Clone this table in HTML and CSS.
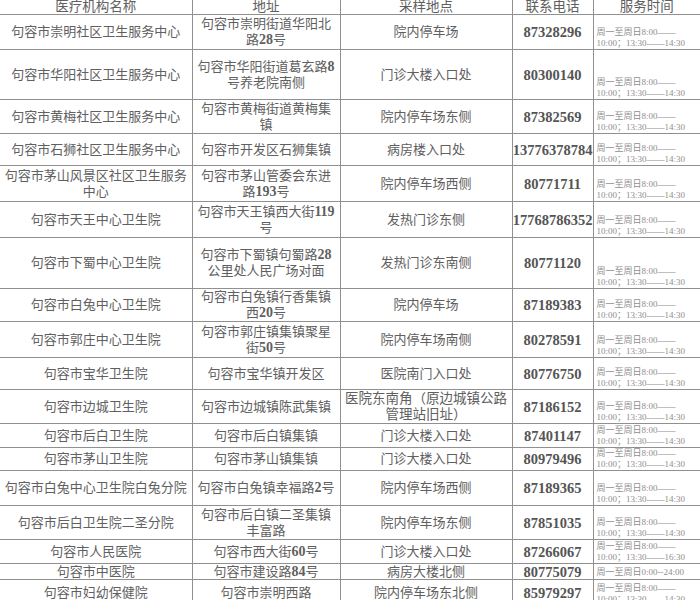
FILE: index.html
```html
<!DOCTYPE html>
<html lang="zh">
<head>
<meta charset="utf-8">
<link rel="stylesheet" href="styles.css">
</head>
<body>
<table class="sites">
<colgroup>
<col class="c-name"><col class="c-addr"><col class="c-place"><col class="c-tel"><col class="c-time">
</colgroup>
<thead>
<tr><th>医疗机构名称</th><th>地址</th><th>采样地点</th><th>联系电话</th><th>服务时间</th></tr>
</thead>
<tbody>
<tr><td>句容市崇明社区卫生服务中心</td><td>句容市崇明街道华阳北<br>路<span class="d">28</span>号</td><td>院内停车场</td><td class="tel">87328296</td><td class="time">周一至周日8:00——<br>10:00；13:30——14:30</td></tr>
<tr><td>句容市华阳社区卫生服务中心</td><td>句容市华阳街道葛玄路<span class="d">8</span><br>号养老院南侧</td><td>门诊大楼入口处</td><td class="tel">80300140</td><td class="time">周一至周日8:00——<br>10:00；13:30——14:30</td></tr>
<tr><td>句容市黄梅社区卫生服务中心</td><td>句容市黄梅街道黄梅集<br>镇</td><td>院内停车场东侧</td><td class="tel">87382569</td><td class="time">周一至周日8:00——<br>10:00；13:30——14:30</td></tr>
<tr><td>句容市石狮社区卫生服务中心</td><td>句容市开发区石狮集镇</td><td>病房楼入口处</td><td class="tel">13776378784</td><td class="time">周一至周日8:00——<br>10:00；13:30——14:30</td></tr>
<tr><td>句容市茅山风景区社区卫生服务<br>中心</td><td>句容市茅山管委会东进<br>路<span class="d">193</span>号</td><td>院内停车场西侧</td><td class="tel">80771711</td><td class="time">周一至周日8:00——<br>10:00；13:30——14:30</td></tr>
<tr><td>句容市天王中心卫生院</td><td>句容市天王镇西大街<span class="d">119</span><br>号</td><td>发热门诊东侧</td><td class="tel">17768786352</td><td class="time">周一至周日8:00——<br>10:00；13:30——14:30</td></tr>
<tr><td>句容市下蜀中心卫生院</td><td>句容市下蜀镇句蜀路<span class="d">28</span><br>公里处人民广场对面</td><td>发热门诊东南侧</td><td class="tel">80771120</td><td class="time">周一至周日8:00——<br>10:00；13:30——14:30</td></tr>
<tr><td>句容市白兔中心卫生院</td><td>句容市白兔镇行香集镇<br>西<span class="d">20</span>号</td><td>院内停车场</td><td class="tel">87189383</td><td class="time">周一至周日8:00——<br>10:00；13:30——14:30</td></tr>
<tr><td>句容市郭庄中心卫生院</td><td>句容市郭庄镇集镇聚星<br>街<span class="d">50</span>号</td><td>院内停车场南侧</td><td class="tel">80278591</td><td class="time">周一至周日8:00——<br>10:00；13:30——14:30</td></tr>
<tr><td>句容市宝华卫生院</td><td>句容市宝华镇开发区</td><td>医院南门入口处</td><td class="tel">80776750</td><td class="time">周一至周日8:00——<br>10:00；13:30——14:30</td></tr>
<tr><td>句容市边城卫生院</td><td>句容市边城镇陈武集镇</td><td class="wide">医院东南角（原边城镇公路<br>管理站旧址）</td><td class="tel">87186152</td><td class="time">周一至周日8:00——<br>10:00；13:30——14:30</td></tr>
<tr><td>句容市后白卫生院</td><td>句容市后白镇集镇</td><td>门诊大楼入口处</td><td class="tel">87401147</td><td class="time">周一至周日8:00——<br>10:00；13:30——14:30</td></tr>
<tr><td>句容市茅山卫生院</td><td>句容市茅山镇集镇</td><td>门诊大楼入口处</td><td class="tel">80979496</td><td class="time">周一至周日8:00——<br>10:00；13:30——14:30</td></tr>
<tr><td>句容市白兔中心卫生院白兔分院</td><td>句容市白兔镇幸福路<span class="d">2</span>号</td><td>院内停车场西侧</td><td class="tel">87189365</td><td class="time">周一至周日8:00——<br>10:00；13:30——14:30</td></tr>
<tr><td>句容市后白卫生院二圣分院</td><td>句容市后白镇二圣集镇<br>丰富路</td><td>院内停车场东侧</td><td class="tel">87851035</td><td class="time">周一至周日8:00——<br>10:00；13:30——14:30</td></tr>
<tr><td>句容市人民医院</td><td>句容市西大街<span class="d">60</span>号</td><td>门诊大楼入口处</td><td class="tel">87266067</td><td class="time">周一至周日8:00——<br>10:00；13:30——16:30</td></tr>
<tr><td>句容市中医院</td><td>句容市建设路<span class="d">84</span>号</td><td>病房大楼北侧</td><td class="tel">80775079</td><td class="time">周一至周日0:00--24:00</td></tr>
<tr><td>句容市妇幼保健院</td><td>句容市崇明西路</td><td>院内停车场东北侧</td><td class="tel">85979297</td><td class="time">周一至周日8:00——<br>10:00；13:30——14:30</td></tr>
</tbody>
</table>
</body>
</html>
```

FILE: styles.css
```css
html, body {
  margin: 0;
  padding: 0;
  background: #fff;
  overflow: hidden;
}

.sites {
  border-collapse: collapse;
  table-layout: fixed;
  width: 700px;
  font-family: "Liberation Serif", "Noto Sans CJK SC", serif;
  color: #606060;
}

.c-name { width: 192px; }
.c-addr { width: 148px; }
.c-place { width: 172px; }
.c-tel { width: 81px; }
.c-time { width: 107px; }

.sites th,
.sites td {
  border: 1px solid #909090;
  padding: 0;
  text-align: center;
  vertical-align: middle;
  white-space: nowrap;
  overflow: hidden;
  font-size: 13px;
  line-height: 16px;
  font-weight: 400;
}

.sites th {
  border-top: none;
  height: 14px;
  line-height: 14px;
  font-size: 13.5px;
  color: #606060;
}

.sites tr > :first-child { border-left: none; }
.sites tr > :last-child { border-right: none; }

.sites td.tel {
  font-size: 14.5px;
  font-weight: 700;
  color: #555;
}

.sites td.time {
  text-align: left;
  vertical-align: bottom;
  padding-left: 3px;
  font-size: 9px;
  line-height: 11px;
  color: #8e8e8e;
}

.sites td.wide { font-size: 13.5px; }

.d { font-weight: 700; font-size: 14px; }

.sites tbody tr:nth-child(1) { height: 35px; }
.sites tbody tr:nth-child(2) { height: 50px; }
.sites tbody tr:nth-child(3) { height: 34px; }
.sites tbody tr:nth-child(4) { height: 32px; }
.sites tbody tr:nth-child(5) { height: 36px; }
.sites tbody tr:nth-child(6) { height: 36px; }
.sites tbody tr:nth-child(7) { height: 51px; }
.sites tbody tr:nth-child(8) { height: 33px; }
.sites tbody tr:nth-child(9) { height: 36px; }
.sites tbody tr:nth-child(10) { height: 32px; }
.sites tbody tr:nth-child(11) { height: 34px; }
.sites tbody tr:nth-child(12) { height: 24px; }
.sites tbody tr:nth-child(13) { height: 22px; }
.sites tbody tr:nth-child(14) { height: 35px; }
.sites tbody tr:nth-child(15) { height: 34px; }
.sites tbody tr:nth-child(16) { height: 24px; }
.sites tbody tr:nth-child(17) { height: 16px; }
.sites tbody tr:nth-child(17) td { line-height: 14px; }
.sites tbody tr:nth-child(18) { height: 26px; }
```
